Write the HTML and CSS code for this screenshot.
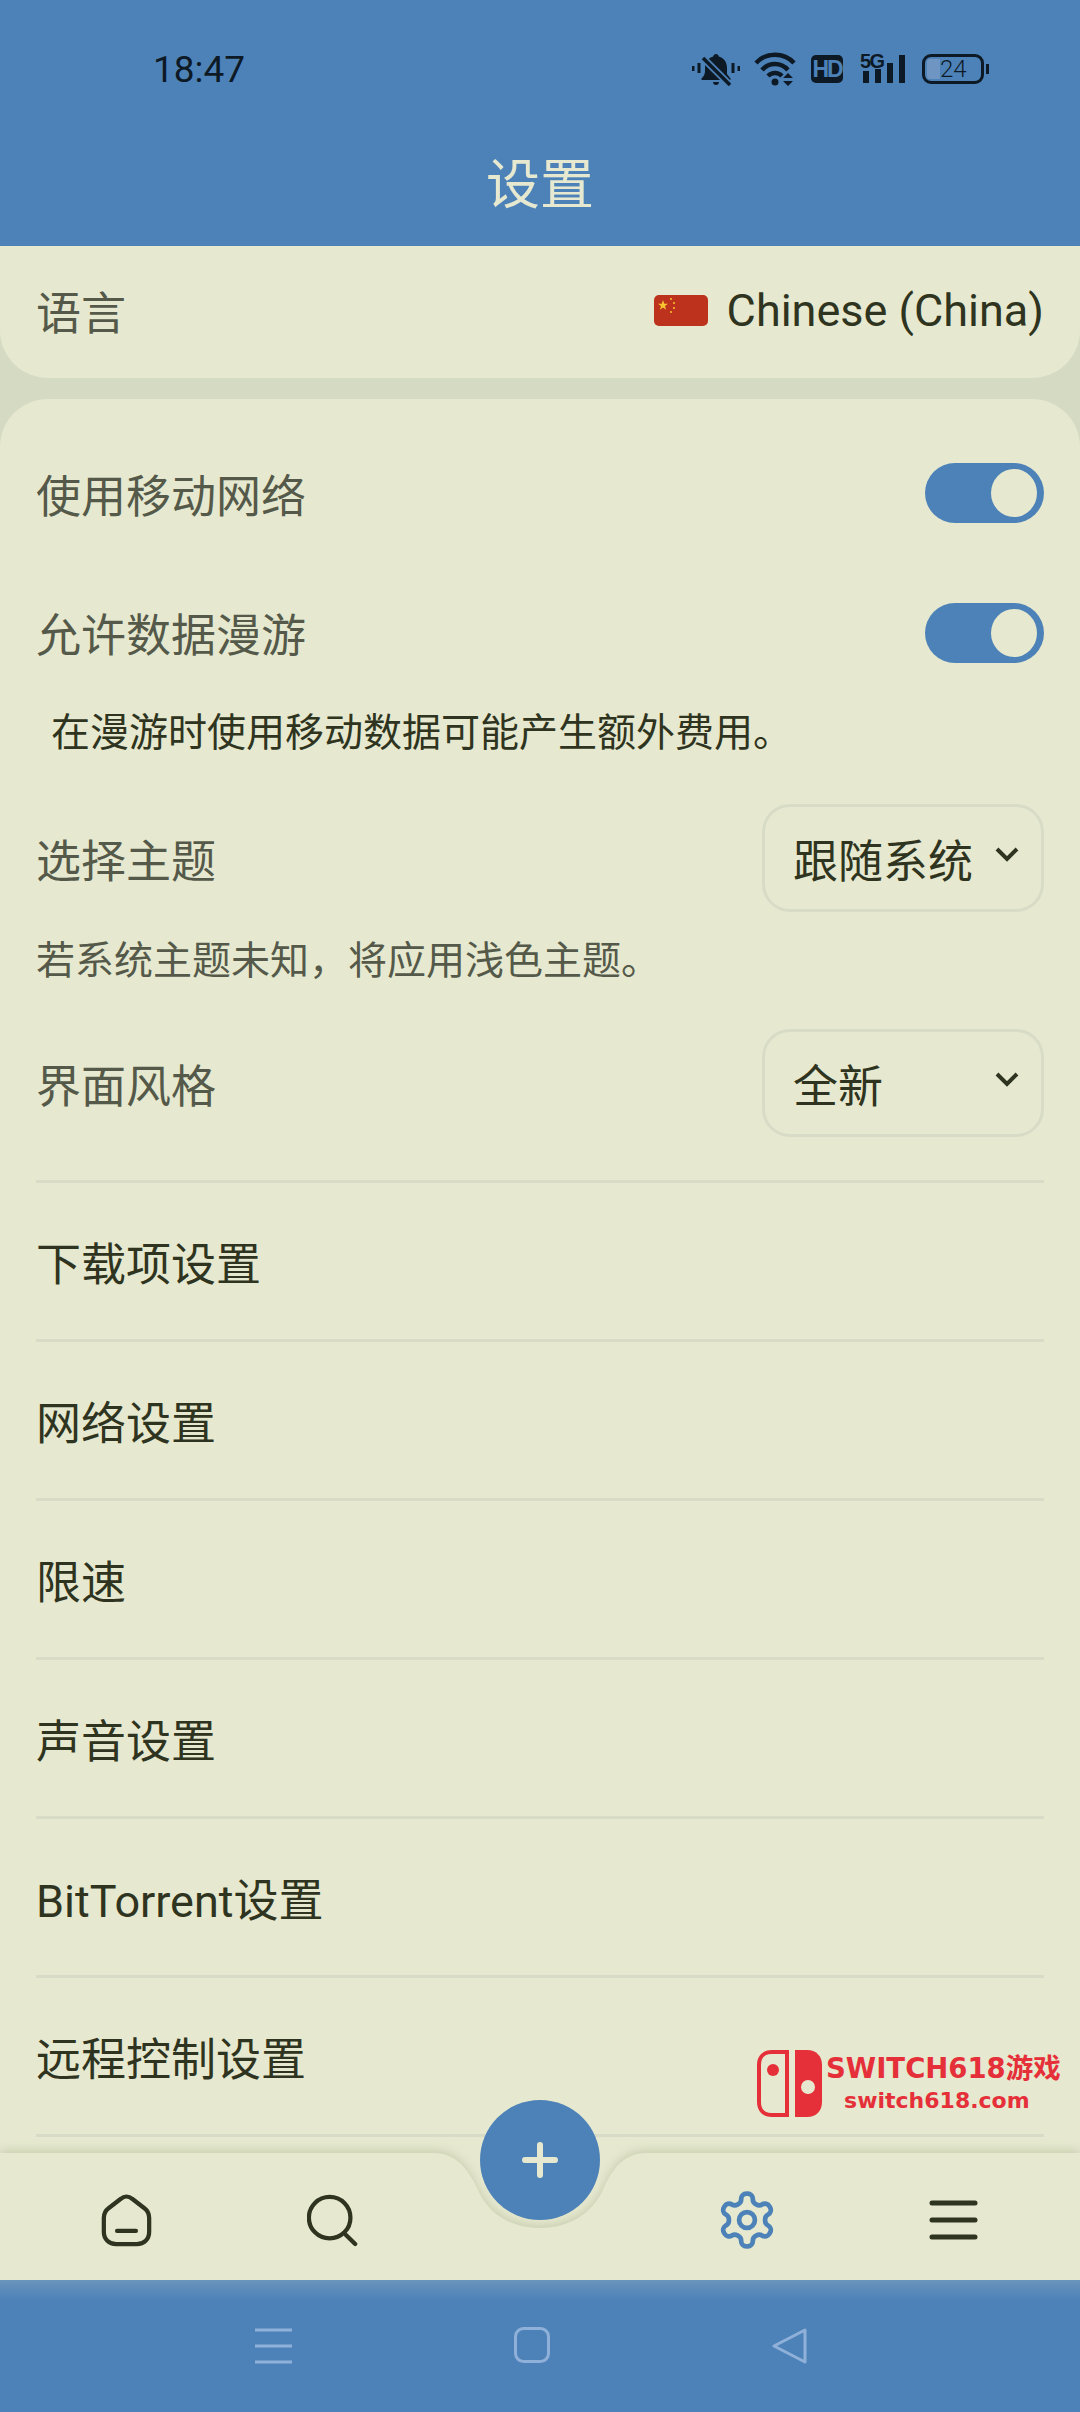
FILE: index.html
```html
<!DOCTYPE html>
<html lang="zh-CN">
<head>
  <meta charset="UTF-8">
  <meta name="viewport" content="width=device-width, initial-scale=1.0">
  <title>设置</title>
  <link rel="stylesheet" href="styles.css">
</head>
<body>
  <header class="app-header">
    <div class="status-bar">
      <span class="status-time">18:47</span>
      <div class="status-icons">
        <svg class="icon-bell" width="48" height="33" viewBox="0 0 48 33">
          <path d="M24 1c1.500 0 2.500 1 2.800 2.400C32.500 5 35 9.500 35 15v6l3.500 4.500v1.500H9.500v-1.500C12 23 13 21 13 18v-3c0-5.500 2.500-10 8.200-11.600C21.500 2 22.500 1 24 1zM21 29h6c0 2-1.300 3-3 3s-3-1-3-3z" fill="#0d1a26"/>
          <path d="M10 4l29 29" stroke="#4d82b8" stroke-width="7"/>
          <path d="M11 5l27 27" stroke="#0d1a26" stroke-width="3.500"/>
          <path d="M1 13v5M7 10v10M41 10v10M47 13v5" stroke="#0d1a26" stroke-width="3"/>
        </svg>
        <svg class="icon-wifi" width="44" height="34" viewBox="0 0 44 34">
          <path d="M2 11C12 0 30 0 40 11M8 18c7-8 19-8 26 0M14 24c4-4 10-4 14 0" fill="none" stroke="#0d1a26" stroke-width="4.500"/>
          <circle cx="21" cy="30" r="3.500" fill="#0d1a26"/>
          <path d="M34 21l5 5H29zM34 34l5-5H29z" fill="#0d1a26"/>
        </svg>
        <span class="icon-hd">HD</span>
        <svg class="icon-signal" width="46" height="38" viewBox="0 -6 46 38">
          <text class="signal-label" x="0" y="15">5G</text>
          <path d="M3 18h6v12H3zM15 16h6v14h-6zM27 10h6v20h-6zM39 2h6v28h-6z" fill="#0d1a26"/>
        </svg>
        <div class="battery">
          <span class="battery-fill"></span>
          <span class="battery-level">24</span>
        </div>
      </div>
    </div>
    <h1 class="page-title">设置</h1>
  </header>

  <main class="settings">
    <section class="card card-language">
      <div class="row language-row">
        <span class="row-label">语言</span>
        <div class="language-value">
          <svg width="54" height="31" viewBox="0 0 54 31">
            <rect width="54" height="31" rx="5" fill="#bc321c"/>
            <path d="M9 5l1.300 3.700H14l-3 2.300 1.100 3.700L9 12.500l-3.100 2.200L7 11 4 8.700h3.700z" fill="#f7c531"/>
            <circle cx="17" cy="4" r="1" fill="#f7c531"/>
            <circle cx="20" cy="8" r="1" fill="#f7c531"/>
            <circle cx="20" cy="13" r="1" fill="#f7c531"/>
            <circle cx="17" cy="17" r="1" fill="#f7c531"/>
          </svg>
          <span>Chinese (China)</span>
        </div>
      </div>
    </section>

    <section class="card card-main">
      <div class="row row-switch">
        <span class="row-label">使用移动网络</span>
        <span class="switch"><span class="switch-knob"></span></span>
      </div>
      <div class="row row-switch row-roaming">
        <span class="row-label">允许数据漫游</span>
        <span class="switch"><span class="switch-knob"></span></span>
      </div>
      <p class="hint hint-dark">在漫游时使用移动数据可能产生额外费用。</p>
      <div class="row row-select row-theme">
        <span class="row-label">选择主题</span>
        <div class="select">
          <span>跟随系统</span>
          <svg width="24" height="15" viewBox="0 0 24 15"><path d="M2 2l10 10L22 2" fill="none" stroke="#2f3420" stroke-width="4"/></svg>
        </div>
      </div>
      <p class="hint">若系统主题未知，将应用浅色主题。</p>
      <div class="row row-select">
        <span class="row-label">界面风格</span>
        <div class="select">
          <span>全新</span>
          <svg width="24" height="15" viewBox="0 0 24 15"><path d="M2 2l10 10L22 2" fill="none" stroke="#2f3420" stroke-width="4"/></svg>
        </div>
      </div>

      <ul class="link-list">
        <li>下载项设置</li>
        <li>网络设置</li>
        <li>限速</li>
        <li>声音设置</li>
        <li>BitTorrent设置</li>
        <li>远程控制设置</li>
      </ul>
    </section>

    <div class="watermark">
      <svg width="65" height="67" viewBox="0 0 65 67">
        <path d="M30 2H15C7 2 2 7 2 15v37c0 8 5 13 13 13h15z" fill="none" stroke="#e5303a" stroke-width="4"/>
        <circle cx="16" cy="20" r="6" fill="#e5303a"/>
        <path d="M38 0h12c9 0 15 6 15 15v37c0 9-6 15-15 15H38z" fill="#e5303a"/>
        <circle cx="51" cy="37" r="7" fill="#e6e9cf"/>
      </svg>
      <div class="watermark-text">
        <span class="watermark-name">SWITCH618游戏</span>
        <span class="watermark-url">switch618.com</span>
      </div>
    </div>
  </main>

  <nav class="tabbar">
    <svg class="tabbar-shape" width="1080" height="127" viewBox="0 0 1080 127">
      <path d="M0 0H434C455 0 468 15 478 37C488 60 510 75 540 75C570 75 592 60 603 37C612 15 625 0 646 0H1080V127H0Z" fill="#e6e9cf"/>
    </svg>
    <div class="tab">
      <svg width="51" height="53" viewBox="0 0 54 56" fill="none" stroke="#2f3420" stroke-width="4.500" stroke-linecap="round">
        <path d="M21 5c3.500-3 8.500-3 12 0l13 10c3.500 2.700 5 5.500 5 10v15c0 8-5.500 13-13 13H16C8.500 53 3 48 3 40V25c0-4.500 1.500-7.300 5-10z"/>
        <path d="M17 39h20"/>
      </svg>
    </div>
    <div class="tab">
      <svg width="51" height="53" viewBox="0 0 54 56" fill="none" stroke="#2f3420" stroke-width="4.500" stroke-linecap="round">
        <circle cx="24" cy="25" r="22"/>
        <path d="M41 43l10 10"/>
      </svg>
    </div>
    <div class="tab"></div>
    <div class="tab">
      <svg width="58" height="58" viewBox="1 1 22 22" fill="none" stroke="#4d82b8" stroke-width="1.800">
        <path d="M12.220 2h-.44a2 2 0 0 0-2 2v.18a2 2 0 0 1-1 1.730l-.43.25a2 2 0 0 1-2 0l-.15-.08a2 2 0 0 0-2.730.73l-.22.38a2 2 0 0 0 .73 2.730l.15.1a2 2 0 0 1 1 1.720v.51a2 2 0 0 1-1 1.740l-.15.09a2 2 0 0 0-.73 2.730l.22.38a2 2 0 0 0 2.730.73l.15-.08a2 2 0 0 1 2 0l.43.25a2 2 0 0 1 1 1.730V20a2 2 0 0 0 2 2h.44a2 2 0 0 0 2-2v-.18a2 2 0 0 1 1-1.730l.43-.25a2 2 0 0 1 2 0l.15.08a2 2 0 0 0 2.730-.73l.22-.39a2 2 0 0 0-.73-2.730l-.15-.08a2 2 0 0 1-1-1.740v-.5a2 2 0 0 1 1-1.740l.15-.09a2 2 0 0 0 .73-2.730l-.22-.38a2 2 0 0 0-2.730-.73l-.15.08a2 2 0 0 1-2 0l-.43-.25a2 2 0 0 1-1-1.730V4a2 2 0 0 0-2-2z"/>
        <circle cx="12" cy="12" r="3"/>
      </svg>
    </div>
    <div class="tab">
      <svg width="49" height="40" viewBox="0 0 49 40" fill="none" stroke="#2f3420" stroke-width="5" stroke-linecap="round">
        <path d="M3 3h43M3 20h43M3 37h43"/>
      </svg>
    </div>
    <button class="fab" type="button">
      <svg width="36" height="36" viewBox="0 0 36 36" fill="none" stroke="#e6e9cf" stroke-width="6" stroke-linecap="round">
        <path d="M18 3v30M3 18h30"/>
      </svg>
    </button>
  </nav>

  <div class="system-nav">
    <svg width="37" height="38" viewBox="0 0 37 38" fill="none" stroke="#8fb0d8" stroke-width="3">
      <path d="M0 3h37M0 19h37M0 35h37"/>
    </svg>
    <svg width="36" height="36" viewBox="0 0 36 36" fill="none" stroke="#8fb0d8" stroke-width="3">
      <rect x="1.500" y="1.500" width="33" height="33" rx="8"/>
    </svg>
    <svg width="36" height="38" viewBox="0 0 36 38" fill="none" stroke="#8fb0d8" stroke-width="3" stroke-linejoin="round">
      <path d="M33 3v32L2 19z"/>
    </svg>
  </div>
</body>
</html>
```

FILE: styles.css
```css
:root {
  --blue: #4d82b8;
  --card: #e6e9cf;
  --gap: #d5dac3;
  --line: #d8dcc6;
  --text: #2f3420;
  --muted: #55594a;
  --status: #0d1a26;
}

* {
  box-sizing: border-box;
}

body {
  margin: 0;
  width: 1080px;
  height: 2412px;
  display: flex;
  flex-direction: column;
  overflow: hidden;
  background-color: var(--card);
  color: var(--text);
  font-family: Roboto, "Noto Sans CJK SC", sans-serif;
  font-size: 45px;
}

.app-header {
  height: 246px;
  flex: none;
  background-color: var(--blue);
}

.status-bar {
  height: 138px;
  padding: 0 96px 0 153px;
  display: flex;
  align-items: center;
  justify-content: space-between;
  color: var(--status);
}

.status-time {
  font-size: 37px;
  font-family: Roboto, sans-serif;
}

.status-icons {
  display: flex;
  align-items: center;
}

.icon-bell {
  margin-right: 14px;
}

.icon-wifi {
  margin-right: 13px;
}

.icon-hd {
  width: 32px;
  height: 28px;
  margin-right: 17px;
  border-radius: 5px;
  background-color: var(--status);
  color: var(--blue);
  font: bold 23px/28px "Liberation Sans", sans-serif;
  letter-spacing: -2px;
  text-align: center;
}

.icon-signal {
  margin-top: -6px;
  margin-right: 16px;
}

.signal-label {
  font: bold 20px "Liberation Sans", sans-serif;
  letter-spacing: -1.500px;
  fill: var(--status);
}

.battery {
  position: relative;
  width: 62px;
  height: 30px;
  border: 3px solid var(--status);
  border-radius: 9px;
  font-size: 24px;
  line-height: 24px;
}

.battery::after {
  content: "";
  position: absolute;
  right: -8px;
  top: 7px;
  width: 3px;
  height: 10px;
  background-color: var(--status);
}

.battery-fill {
  position: absolute;
  left: 2px;
  top: 2px;
  bottom: 2px;
  width: 13px;
  border-radius: 3px 0 0 3px;
  background-color: #6f96c2;
}

.battery-level {
  position: absolute;
  left: 15px;
  top: 0;
  font-family: Roboto, sans-serif;
  font-weight: 300;
}

.page-title {
  margin: 0;
  height: 92px;
  padding-top: 2px;
  font-size: 54px;
  font-weight: 400;
  line-height: 92px;
  text-align: center;
  color: var(--card);
}

.settings {
  position: relative;
  flex: 1;
  min-height: 0;
  overflow: hidden;
  background-color: var(--gap);
}

.card {
  background-color: var(--card);
  padding: 0 36px;
}

.card-language {
  height: 132px;
  padding-bottom: 4px;
  border-radius: 0 0 48px 48px;
  display: flex;
  align-items: center;
}

.card-main {
  margin-top: 21px;
  padding-top: 44px;
  padding-bottom: 40px;
  border-radius: 48px 48px 0 0;
}

.row {
  display: flex;
  align-items: center;
  justify-content: space-between;
}

.language-row {
  width: 100%;
}

.row-label {
  color: var(--muted);
}

.language-value {
  display: flex;
  align-items: center;
  gap: 19px;
}

.row-switch {
  height: 100px;
}

.row-roaming {
  margin-top: 39px;
}

.switch {
  width: 119px;
  height: 60px;
  padding: 6px 7px;
  display: flex;
  justify-content: flex-end;
  border-radius: 30px;
  background-color: var(--blue);
}

.row-roaming .switch {
  margin-top: 2px;
}

.switch-knob {
  width: 46px;
  height: 48px;
  border-radius: 50%;
  background-color: var(--card);
}

.hint {
  margin: 0;
  height: 50px;
  font-size: 39px;
  line-height: 50px;
  color: var(--muted);
}

.hint-dark {
  margin-top: 26px;
  padding-left: 15px;
  color: var(--text);
}

.row-select {
  height: 108px;
  margin-top: 43px;
  margin-bottom: 24px;
}

.row-theme {
  margin-top: 46px;
}

.select {
  width: 282px;
  height: 108px;
  padding: 0 22px 0 28px;
  display: flex;
  align-items: center;
  justify-content: space-between;
  border: 3px solid var(--line);
  border-radius: 28px;
}

.select svg {
  margin-bottom: 8px;
}

.link-list {
  margin: 43px 0 0;
  padding: 0;
  list-style: none;
  border-top: 3px solid var(--line);
}

.link-list li {
  height: 159px;
  display: flex;
  align-items: center;
  border-bottom: 3px solid var(--line);
}

.watermark {
  position: absolute;
  left: 757px;
  top: 1804px;
  display: flex;
  gap: 4px;
  color: #e5303a;
}

.watermark-text {
  display: flex;
  flex-direction: column;
  align-items: center;
  font-family: "DejaVu Sans", "Noto Sans CJK SC", sans-serif;
  font-weight: bold;
  white-space: nowrap;
}

.watermark-name {
  font-size: 27.500px;
  line-height: 36px;
}

.watermark-url {
  margin-right: 13px;
  font-size: 22px;
  line-height: 30px;
}

.tabbar {
  position: relative;
  height: 127px;
  flex: none;
  padding-top: 7px;
  display: grid;
  grid-template-columns: 252px 160px 256px 158px 254px;
  align-items: center;
  justify-items: center;
}

.tabbar-shape {
  position: absolute;
  left: 0;
  top: 0;
  overflow: visible;
  filter: drop-shadow(0 -3px 5px rgba(120, 130, 90, 0.25));
}

.tab {
  position: relative;
  display: flex;
}

.fab {
  position: absolute;
  left: 480px;
  top: -53px;
  width: 120px;
  height: 120px;
  padding: 0;
  display: flex;
  align-items: center;
  justify-content: center;
  border: none;
  border-radius: 50%;
  background-color: var(--blue);
}

.system-nav {
  position: relative;
  height: 132px;
  flex: none;
  padding-top: 47px;
  padding-left: 255px;
  display: flex;
  align-items: flex-start;
  gap: 222px;
  background: linear-gradient(#6a94bb, var(--blue) 20px);
}
```
